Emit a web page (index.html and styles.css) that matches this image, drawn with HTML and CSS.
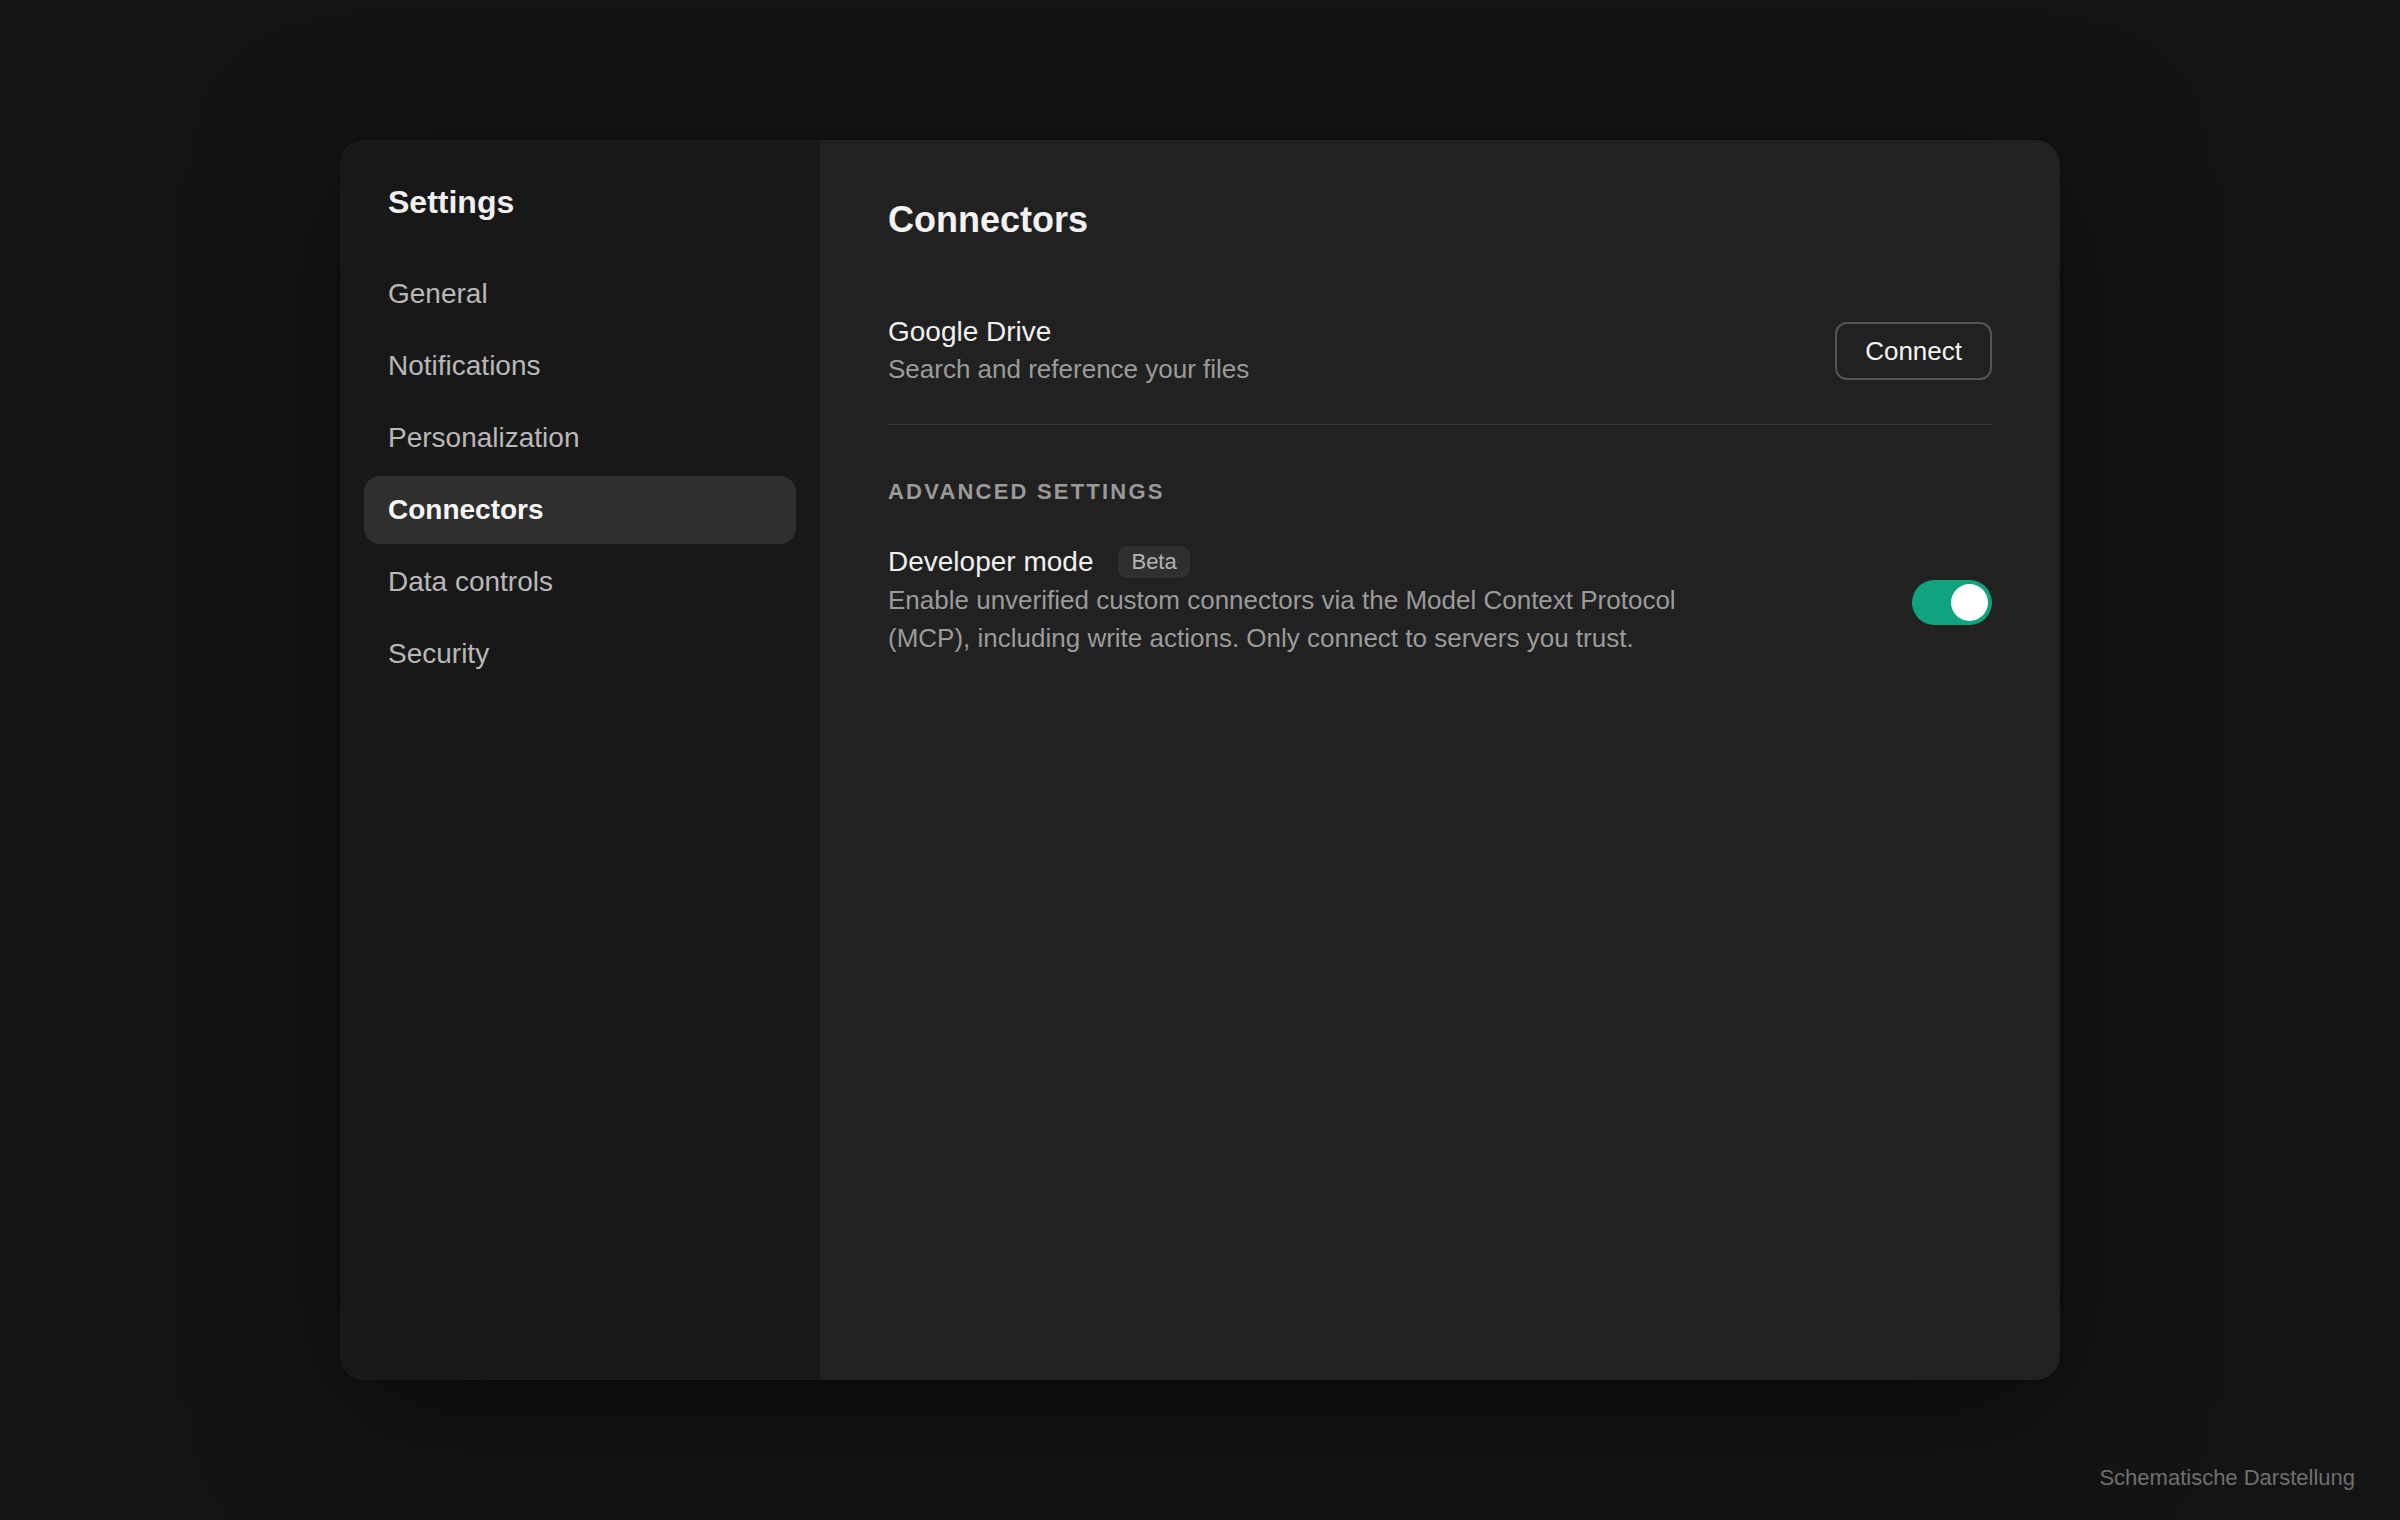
FILE: index.html
```html
<!DOCTYPE html>
<html lang="en">
<head>
    <meta charset="UTF-8">
    <meta name="viewport" content="width=device-width, initial-scale=1.0">
    <title>Settings - Connectors</title>
    <link rel="stylesheet" href="styles.css">
</head>
<body>
    <div class="settings">
        <aside class="sidebar">
            <h2>Settings</h2>
            <nav class="nav">
                <a class="nav-item" href="#">General</a>
                <a class="nav-item" href="#">Notifications</a>
                <a class="nav-item" href="#">Personalization</a>
                <a class="nav-item active" href="#">Connectors</a>
                <a class="nav-item" href="#">Data controls</a>
                <a class="nav-item" href="#">Security</a>
            </nav>
        </aside>

        <main class="content">
            <h1>Connectors</h1>

            <div class="row row-bordered">
                <div class="row-text">
                    <div class="row-title">Google Drive</div>
                    <div class="row-desc">Search and reference your files</div>
                </div>
                <button class="btn-connect">Connect</button>
            </div>

            <h4 class="section-title">Advanced settings</h4>

            <div class="row">
                <div class="row-text">
                    <div class="row-head">
                        <span class="row-title">Developer mode</span>
                        <span class="badge">Beta</span>
                    </div>
                    <div class="row-desc narrow">Enable unverified custom connectors via the Model Context Protocol (MCP), including write actions. Only connect to servers you trust.</div>
                </div>
                <label class="toggle on">
                    <span class="knob"></span>
                </label>
            </div>
        </main>
    </div>

    <div class="caption">Schematische Darstellung</div>
</body>
</html>
```

FILE: styles.css
```css
* {
    box-sizing: border-box;
}

body {
    font-family: 'Liberation Sans', Arial, sans-serif;
    background-color: #141414;
    color: #ececec;
    margin: 0;
    padding: 0;
    height: 100vh;
    display: flex;
    align-items: center;
    justify-content: center;
    overflow: hidden;
}

.settings {
    width: 1720px;
    height: 1240px;
    display: flex;
    border-radius: 24px;
    overflow: hidden;
    background-color: #212121;
    box-shadow: 0 0 0 1px rgba(0, 0, 0, 0.2), 0 30px 140px rgba(0, 0, 0, 0.55);
}

/* sidebar */
.sidebar {
    width: 480px;
    flex-shrink: 0;
    background-color: #181818;
    padding: 42px 24px;
}

.sidebar h2 {
    margin: 0 0 38px 24px;
    font-size: 32px;
    line-height: 40px;
    font-weight: bold;
    color: #f0f0f0;
}

.nav {
    display: flex;
    flex-direction: column;
    gap: 4px;
}

.nav-item {
    height: 68px;
    display: flex;
    align-items: center;
    padding-left: 24px;
    border-radius: 16px;
    font-size: 28px;
    color: #b8b8b8;
    text-decoration: none;
}

.nav-item.active {
    background-color: #2f2f2f;
    color: #f7f7f7;
    font-weight: bold;
}

/* main */
.content {
    flex: 1;
    padding: 58px 68px;
}

.content h1 {
    margin: 0;
    font-size: 36px;
    line-height: 44px;
    font-weight: bold;
    color: #f2f2f2;
}

.row {
    display: flex;
    align-items: center;
    justify-content: space-between;
}

.row-bordered {
    margin-top: 72px;
    padding-bottom: 36px;
    border-bottom: 1px solid #393939;
}

.row-title {
    font-size: 28px;
    line-height: 36px;
    color: #f0f0f0;
}

.row-desc {
    font-size: 26px;
    line-height: 38px;
    color: #9b9b9b;
}

.row-desc.narrow {
    max-width: 820px;
}

.row-head {
    display: flex;
    align-items: center;
    gap: 25px;
    margin-top: 38px;
    margin-bottom: 1px;
}

.badge {
    height: 32px;
    padding: 0 13px;
    display: flex;
    align-items: center;
    border-radius: 9px;
    background-color: #2f2f2f;
    color: #b4b4b4;
    font-size: 22px;
}

.btn-connect {
    height: 58px;
    padding: 0 28px;
    border: 2px solid #545454;
    border-radius: 12px;
    background-color: transparent;
    color: #f4f4f4;
    font-family: inherit;
    font-size: 26px;
    cursor: pointer;
}

.section-title {
    margin: 53px 0 0;
    font-size: 22px;
    line-height: 28px;
    font-weight: bold;
    letter-spacing: 0.1em;
    text-transform: uppercase;
    color: #9a9a9a;
}

.toggle {
    width: 80px;
    height: 45px;
    border-radius: 23px;
    background-color: #3a3a3a;
    padding: 4px;
    display: flex;
    flex-shrink: 0;
    margin-top: 42px;
}

.toggle.on {
    background-color: #10a37f;
    justify-content: flex-end;
}

.knob {
    width: 37px;
    height: 37px;
    border-radius: 50%;
    background-color: #fff;
}

.caption {
    position: absolute;
    right: 45px;
    bottom: 29px;
    font-size: 22px;
    color: #6f6f6f;
}
```
